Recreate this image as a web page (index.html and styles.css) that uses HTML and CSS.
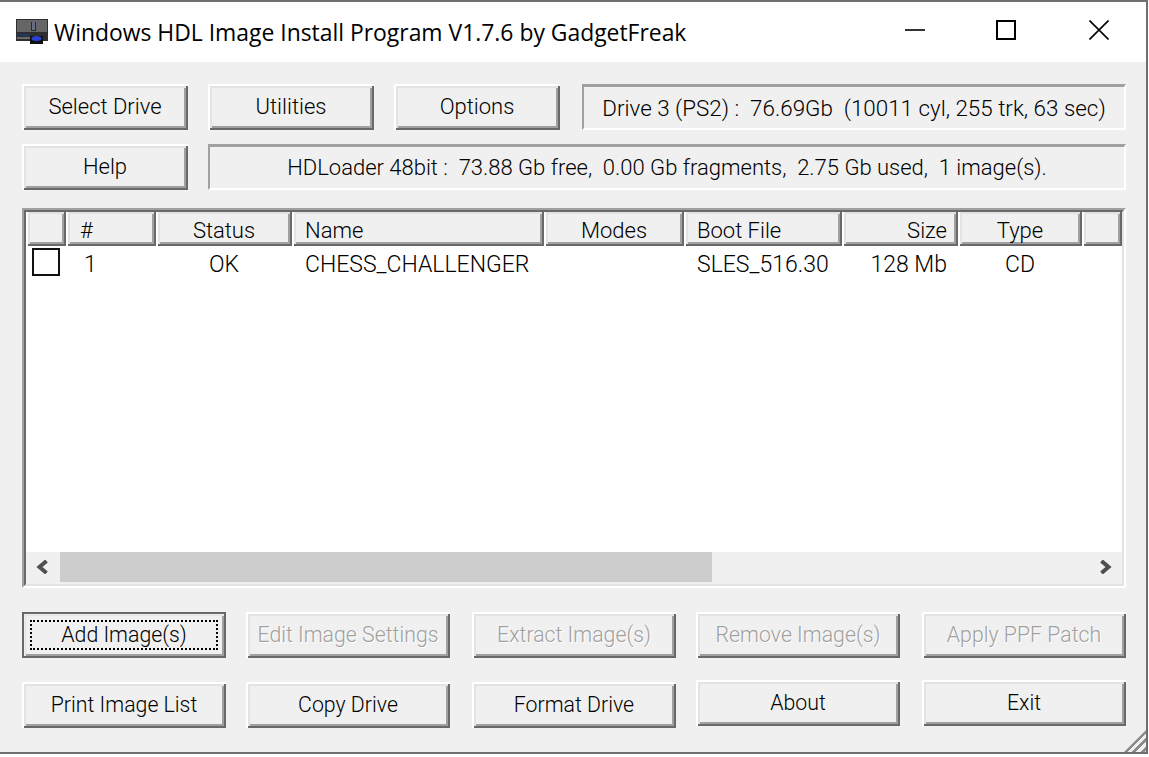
FILE: index.html
```html
<!DOCTYPE html>
<html lang="en">
<head>
    <meta charset="UTF-8">
    <meta name="viewport" content="width=device-width, initial-scale=1.0">
    <title>Windows HDL Image Install Program</title>
    <link rel="stylesheet" href="styles.css">
</head>
<body>
    <div class="window">
        <div class="titlebar">
            <svg class="app-icon" width="32" height="26" viewBox="0 0 32 26">
                <rect x="0" y="0" width="32" height="22" fill="#2e2e2e"/>
                <rect x="1" y="1" width="30" height="12" fill="#666"/>
                <rect x="15" y="3" width="5" height="9" fill="#2a2a2a"/>
                <path d="M16 4H19M16 6H19M16 8H19M16 10H19" stroke="#9db4e0" stroke-width="1"/>
                <rect x="1" y="15" width="13" height="2" fill="#1d3a66"/>
                <rect x="1" y="18" width="13" height="2" fill="#6b6b6b"/>
                <rect x="14" y="17" width="13" height="8" fill="#111"/>
                <ellipse cx="20.5" cy="19.5" rx="5" ry="2.5" fill="#2a40d0"/>
            </svg>
            <div class="title">Windows HDL Image Install Program V1.7.6 by GadgetFreak</div>
            <div class="caption-buttons">
                <svg class="cap-min" width="20" height="20" viewBox="0 0 20 20"><path d="M0 10H20" stroke="#000" stroke-width="1.6" fill="none"/></svg>
                <svg class="cap-max" width="20" height="20" viewBox="0 0 20 20"><rect x="1" y="1" width="18" height="18" stroke="#000" stroke-width="2" fill="none"/></svg>
                <svg class="cap-close" width="20" height="20" viewBox="0 0 20 20"><path d="M0.5 0.5L19.5 19.5M19.5 0.5L0.5 19.5" stroke="#000" stroke-width="1.6" fill="none"/></svg>
            </div>
        </div>

        <div class="client">
            <div class="top-row">
                <button class="btn">Select Drive</button>
                <button class="btn">Utilities</button>
                <button class="btn">Options</button>
                <div class="info-box">Drive 3 (PS2) :&nbsp; 76.69Gb &nbsp;(10011 cyl, 255 trk, 63 sec)</div>
            </div>
            <div class="second-row">
                <button class="btn">Help</button>
                <div class="info-box">HDLoader 48bit :&nbsp; 73.88 Gb free,&nbsp; 0.00 Gb fragments,&nbsp; 2.75 Gb used,&nbsp; 1 image(s).</div>
            </div>

            <div class="list">
                <div class="list-inner">
                    <div class="list-head">
                        <div class="col-head"></div>
                        <div class="col-head num">#</div>
                        <div class="col-head mid">Status</div>
                        <div class="col-head left">Name</div>
                        <div class="col-head mid">Modes</div>
                        <div class="col-head left">Boot File</div>
                        <div class="col-head right">Size</div>
                        <div class="col-head mid">Type</div>
                        <div class="col-head"></div>
                    </div>
                    <div class="list-body">
                        <div class="list-row">
                            <div class="cell"><span class="checkbox"></span></div>
                            <div class="cell num-val">1</div>
                            <div class="cell mid">OK</div>
                            <div class="cell left">CHESS_CHALLENGER</div>
                            <div class="cell"></div>
                            <div class="cell left">SLES_516.30</div>
                            <div class="cell right">128 Mb</div>
                            <div class="cell mid">CD</div>
                        </div>
                    </div>
                    <div class="hscroll">
                        <div class="arrow">
                            <svg width="14" height="14" viewBox="0 0 14 14"><path d="M10.5 1L3.5 7L10.5 13" stroke="#505050" stroke-width="4" fill="none"/></svg>
                        </div>
                        <div class="thumb"></div>
                        <div class="arrow arrow-right">
                            <svg width="14" height="14" viewBox="0 0 14 14"><path d="M3.5 1L10.5 7L3.5 13" stroke="#505050" stroke-width="4" fill="none"/></svg>
                        </div>
                    </div>
                </div>
            </div>

            <div class="bottom-row first">
                <button class="btn wide focused"><span class="focus-ring">Add Image(s)</span></button>
                <button class="btn wide" disabled>Edit Image Settings</button>
                <button class="btn wide" disabled>Extract Image(s)</button>
                <button class="btn wide" disabled>Remove Image(s)</button>
                <button class="btn wide" disabled>Apply PPF Patch</button>
            </div>
            <div class="bottom-row second">
                <button class="btn wide lower">Print Image List</button>
                <button class="btn wide lower">Copy Drive</button>
                <button class="btn wide lower">Format Drive</button>
                <button class="btn wide">About</button>
                <button class="btn wide">Exit</button>
            </div>
            <div class="grip"></div>
        </div>
    </div>
</body>
</html>
```

FILE: styles.css
```css
body {
    margin: 0;
    background-color: #fff;
    font-family: 'Roboto', 'Liberation Sans', sans-serif;
    font-size: 23px;
    font-weight: 300;
    color: #000;
    overflow: hidden;
}

.window {
    width: 1148px;
    height: 754px;
    box-sizing: border-box;
    border-top: 2px solid #6f6f6f;
    border-right: 2px solid #6f6f6f;
    border-bottom: 2px solid #6f6f6f;
    display: flex;
    flex-direction: column;
}

.titlebar {
    height: 60px;
    background-color: #fff;
    display: flex;
    align-items: center;
    padding-left: 16px;
}

.app-icon {
    margin-right: 6px;
}

.title {
    font-family: 'Open Sans', sans-serif;
    font-size: 22.9px;
    font-weight: 400;
    white-space: nowrap;
    flex: 1;
}

.caption-buttons {
    display: flex;
    align-items: center;
    margin: 0 37px 4px 0;
    gap: 73px;
}

.cap-min {
    margin-right: -2px;
}

.client {
    flex: 1;
    position: relative;
    background-color: #f0f0f0;
    padding: 22px 20px 0 22px;
}

.top-row {
    display: grid;
    grid-template-columns: 186px 186px 188px 544px;
    height: 46px;
}

.top-row .info-box {
    font-size: 22.4px;
}

.second-row {
    display: grid;
    grid-template-columns: 186px 918px;
    height: 46px;
    margin-top: 14px;
    font-size: 22px;
}

.btn {
    width: 166px;
    height: 46px;
    padding: 0 0 1px;
    border: none;
    background-color: #f0f0f0;
    font-family: inherit;
    font-size: 22px;
    font-weight: 300;
    color: #000;
    box-shadow: inset 2px 2px 0 #fff, inset -2px -2px 0 #696969, inset 4px 4px 0 #e3e3e3, inset -4px -4px 0 #a0a0a0;
}

.btn.wide {
    width: 204px;
    font-size: 21.3px;
}

.btn:disabled {
    color: #a0a0a0;
    text-shadow: 1px 1px 0 #fff;
}

.btn.focused {
    box-shadow: inset 0 0 0 2px #696969, inset 3px 3px 0 #f0f0f0, inset 4px 4px 0 #e3e3e3, inset -4px -4px 0 #a0a0a0;
    padding: 8px;
}

.focus-ring {
    display: flex;
    align-items: center;
    justify-content: center;
    height: 100%;
    box-sizing: border-box;
    padding-bottom: 1px;
    border: 2px dotted #000;
}

.info-box {
    box-sizing: border-box;
    display: flex;
    align-items: center;
    justify-content: center;
    white-space: nowrap;
    border-top: 3px solid #a0a0a0;
    border-left: 2px solid #a0a0a0;
    border-right: 2px solid #fff;
    border-bottom: 2px solid #fff;
}

.list {
    height: 380px;
    margin-top: 18px;
    box-sizing: border-box;
    border-top: 2px solid #a0a0a0;
    border-left: 2px solid #a0a0a0;
    border-right: 2px solid #fff;
    border-bottom: 2px solid #fff;
}

.list-inner {
    height: 100%;
    box-sizing: border-box;
    border-top: 2px solid #696969;
    border-left: 2px solid #696969;
    border-right: 2px solid #e3e3e3;
    border-bottom: 2px solid #e3e3e3;
    display: flex;
    flex-direction: column;
    background-color: #fff;
}

.list-head,
.list-row {
    display: grid;
    grid-template-columns: 40px 90px 136px 252px 140px 158px 116px 124px 40px;
}

.list-head {
    height: 34px;
}

.col-head {
    display: flex;
    align-items: center;
    box-sizing: border-box;
    padding-top: 2px;
    background-color: #f0f0f0;
    font-size: 22px;
    box-shadow: inset 2px 0 0 #fff, inset -2px -2px 0 #696969, inset 0 2px 0 #e3e3e3, inset 4px 0 0 #e3e3e3, inset -4px -4px 0 #a0a0a0;
}

.list-body {
    flex: 1;
}

.list-row {
    height: 36px;
}

.cell {
    display: flex;
    align-items: center;
    white-space: nowrap;
}

.mid {
    justify-content: center;
}

.left {
    padding-left: 13px;
}

.right {
    justify-content: flex-end;
    padding-right: 11px;
}

.num {
    padding-left: 14px;
}

.num-val {
    padding-left: 18px;
}

.checkbox {
    display: block;
    align-self: flex-start;
    width: 28px;
    height: 28px;
    box-sizing: border-box;
    margin: 2px 0 0 6px;
    border: 2px solid #111;
}

.hscroll {
    height: 30px;
    border-bottom: 2px solid #f0f0f0;
    display: flex;
    background-color: #f0f0f0;
}

.arrow {
    width: 34px;
    display: flex;
    align-items: center;
    justify-content: center;
}

.arrow-right {
    margin-left: auto;
}

.thumb {
    width: 652px;
    background-color: #cdcdcd;
}

.bottom-row {
    display: grid;
    grid-template-columns: 224px 226px 224px 226px 204px;
}

.bottom-row.first {
    margin-top: 24px;
}

.bottom-row.second {
    margin-top: 22px;
}

.lower {
    margin-top: 2px;
}

.grip {
    position: absolute;
    right: 0;
    bottom: 0;
    width: 22px;
    height: 22px;
    background-image: repeating-linear-gradient(135deg, #f0f0f0 0, #f0f0f0 3px, #8c8c8c 3px, #8c8c8c 6px);
    clip-path: polygon(100% 0, 100% 100%, 0 100%);
}
```
